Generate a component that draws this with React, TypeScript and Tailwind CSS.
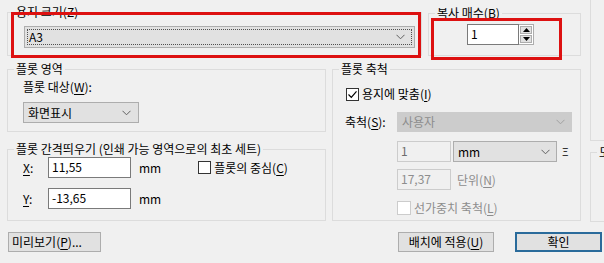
import React from "react";

const FONT = { fontFamily: '"Noto Sans CJK KR", "Noto Sans", sans-serif' };

function Group({
  label,
  className,
  children,
}: {
  label: string;
  className: string;
  children?: React.ReactNode;
}) {
  return (
    <div className={"relative border border-[#dcdcdc] " + className}>
      <div className="absolute left-[6px] top-[-9px] bg-[#f0f0f0] px-[2px] text-[12px] leading-[16px] text-black whitespace-nowrap">
        {label}
      </div>
      {children}
    </div>
  );
}

function Chevron({ color = "#606060" }: { color?: string }) {
  return (
    <svg width="9" height="6" viewBox="0 0 9 6" className="shrink-0">
      <path d="M0.5 0.8 L4.5 4.8 L8.5 0.8" fill="none" stroke={color} strokeWidth="1" />
    </svg>
  );
}

function U({ children }: { children: React.ReactNode }) {
  return <span className="underline underline-offset-2">{children}</span>;
}

export default function App() {
  return (
    <div
      className="relative w-[604px] h-[263px] overflow-hidden bg-[#f0f0f0] text-[12px] text-black"
      style={FONT}
    >
      <div className="flex flex-col">
        <div className="flex h-[222px]">
          {/* main area */}
          <div className="flex flex-col pl-[7px] w-[583px] shrink-0">
            {/* Row 1 */}
            <div className="flex mt-[12px] gap-[6px]">
              <Group label="용지 크기(Z)" className="w-[415px] h-[44px]">
                <div className="ml-[16px] mt-[13px] w-[391px] h-[22px] border border-[#adadad] bg-[#e1e1e1] p-[2px]">
                  <div className="flex h-full items-center justify-between border border-dotted border-[#505050] pl-[1px] pr-[6px]">
                    <span className="leading-[14px]">A3</span>
                    <Chevron />
                  </div>
                </div>
              </Group>
              <Group label="복사 매수(B)" className="mt-[1px] w-[153px] h-[43px]">
                <div className="flex ml-[38px] mt-[10px]">
                  <div className="w-[52px] h-[21px] border border-[#7a7a7a] bg-white pl-[3px] leading-[18px]">
                    1
                  </div>
                  <div className="flex flex-col w-[15px] h-[21px] border border-l-0 border-[#adadad] bg-white p-[1px] gap-[1px]">
                    <div className="flex-1 flex items-center justify-center bg-[#e1e1e1] border border-[#adadad]">
                      <svg width="7" height="4" viewBox="0 0 7 4"><path d="M0 4 L3.5 0 L7 4 Z" fill="#000" /></svg>
                    </div>
                    <div className="flex-1 flex items-center justify-center bg-[#e1e1e1] border border-[#adadad]">
                      <svg width="7" height="4" viewBox="0 0 7 4"><path d="M0 0 L3.5 4 L7 0 Z" fill="#000" /></svg>
                    </div>
                  </div>
                </div>
              </Group>
            </div>

            {/* Row 2 */}
            <div className="flex mt-[13px] gap-[6px]">
              <div className="flex flex-col gap-[17px]">
                <Group label="플롯 영역" className="w-[319px] h-[63px]">
                  <div className="ml-[15px] mt-[9px] leading-[16px]">
                    플롯 대상(<U>W</U>):
                  </div>
                  <div className="ml-[15px] mt-[7px] w-[116px] h-[21px] border border-[#adadad] bg-[#e1e1e1] flex items-center justify-between pl-[4px] pr-[7px]">
                    <span className="leading-[14px]">화면표시</span>
                    <Chevron />
                  </div>
                </Group>
                <Group label="플롯 간격띄우기 (인쇄 가능 영역으로의 최초 세트)" className="w-[319px] h-[72px]">
                  <div className="flex items-center mt-[7px] ml-[15px]">
                    <span className="w-[25px]"><U>X</U>:</span>
                    <div className="w-[83px] h-[21px] border border-[#7a7a7a] bg-white pl-[3px] leading-[18px]">11,55</div>
                    <span className="ml-[8px]">mm</span>
                    <div className="ml-[37px] w-[13px] h-[13px] border border-[#333] bg-white" />
                    <span className="ml-[3px]">플롯의 중심(<U>C</U>)</span>
                  </div>
                  <div className="flex items-center mt-[10px] ml-[15px]">
                    <span className="w-[25px]"><U>Y</U>:</span>
                    <div className="w-[83px] h-[21px] border border-[#7a7a7a] bg-white pl-[3px] leading-[18px]">-13,65</div>
                    <span className="ml-[8px]">mm</span>
                  </div>
                </Group>
              </div>
              <Group label="플롯 축척" className="w-[249px] h-[152px]">
                <div className="flex items-center ml-[13px] mt-[15px]">
                  <div className="w-[13px] h-[13px] border border-[#333] bg-white flex items-center justify-center">
                    <svg width="11" height="11" viewBox="0 0 11 11">
                      <path d="M1.5 5.5 L4.3 8.3 L9.5 2.3" fill="none" stroke="#000" strokeWidth="1.2" />
                    </svg>
                  </div>
                  <span className="ml-[3px]">용지에 맞춤(<U>I</U>)</span>
                </div>
                <div className="flex items-center ml-[12px] mt-[9px]">
                  <span className="w-[52px]">축척(<U>S</U>):</span>
                  <div className="w-[175px] h-[20px] bg-[#cccccc] flex items-center justify-between pl-[5px] pr-[7px] text-[#8d8d8d]">
                    <span>사용자</span>
                    <Chevron color="#a0a0a0" />
                  </div>
                </div>
                <div className="flex items-center ml-[64px] mt-[9px]">
                  <div className="w-[54px] h-[21px] border border-[#cccccc] bg-[#f0f0f0] pl-[3px] leading-[18px] text-[#6d6d6d]">1</div>
                  <div className="ml-[2px] w-[104px] h-[21px] border border-[#adadad] bg-[#e1e1e1] flex items-center justify-between pl-[4px] pr-[6px]">
                    <span>mm</span>
                    <Chevron />
                  </div>
                  <span className="ml-[5px] text-[11px]">Ξ</span>
                </div>
                <div className="flex items-center ml-[64px] mt-[7px]">
                  <div className="w-[54px] h-[21px] border border-[#cccccc] bg-[#f0f0f0] pl-[3px] leading-[18px] text-[#8d8d8d]">17,37</div>
                  <span className="ml-[6px] text-[#8d8d8d]">단위(<U>N</U>)</span>
                </div>
                <div className="flex items-center ml-[64px] mt-[9px]">
                  <div className="w-[14px] h-[14px] border border-[#cccccc] bg-white" />
                  <span className="ml-[3px] text-[#8d8d8d]">선가중치 축척(<U>L</U>)</span>
                </div>
              </Group>
            </div>
          </div>

          {/* far right column (clipped at the window edge) */}
          <div className="flex flex-col ml-[7px] shrink-0">
            <div className="w-[40px] h-[141px] border-l border-b border-[#dcdcdc]" />
            <Group label="도면 방향(D)" className="mt-[11px] w-[40px] h-[70px]" />
          </div>
        </div>

        {/* Buttons row */}
        <div className="flex mt-[10px] pl-[8px]">
          <button className="w-[93px] h-[20px] border border-[#adadad] bg-[#e1e1e1] text-[12px] leading-[16px] text-left pl-[3px]">
            미리보기(<U>P</U>)...
          </button>
          <button className="ml-[297px] w-[96px] h-[20px] border border-[#adadad] bg-[#e1e1e1] text-[12px] leading-[16px]">
            배치에 적용(<U>U</U>)
          </button>
          <button className="ml-[21px] w-[87px] h-[20px] border-2 border-[#2a6b9b] bg-[#e1e1e1] text-[12px] leading-[14px]">
            확인
          </button>
        </div>
      </div>

      {/* red annotation boxes */}
      <div className="absolute left-[11px] top-[12px] w-[410px] h-[46px] border-[3px] border-[#dd1111] pointer-events-none" />
      <div className="absolute left-[431px] top-[18px] w-[131px] h-[42px] border-[3px] border-[#dd1111] pointer-events-none" />
    </div>
  );
}
